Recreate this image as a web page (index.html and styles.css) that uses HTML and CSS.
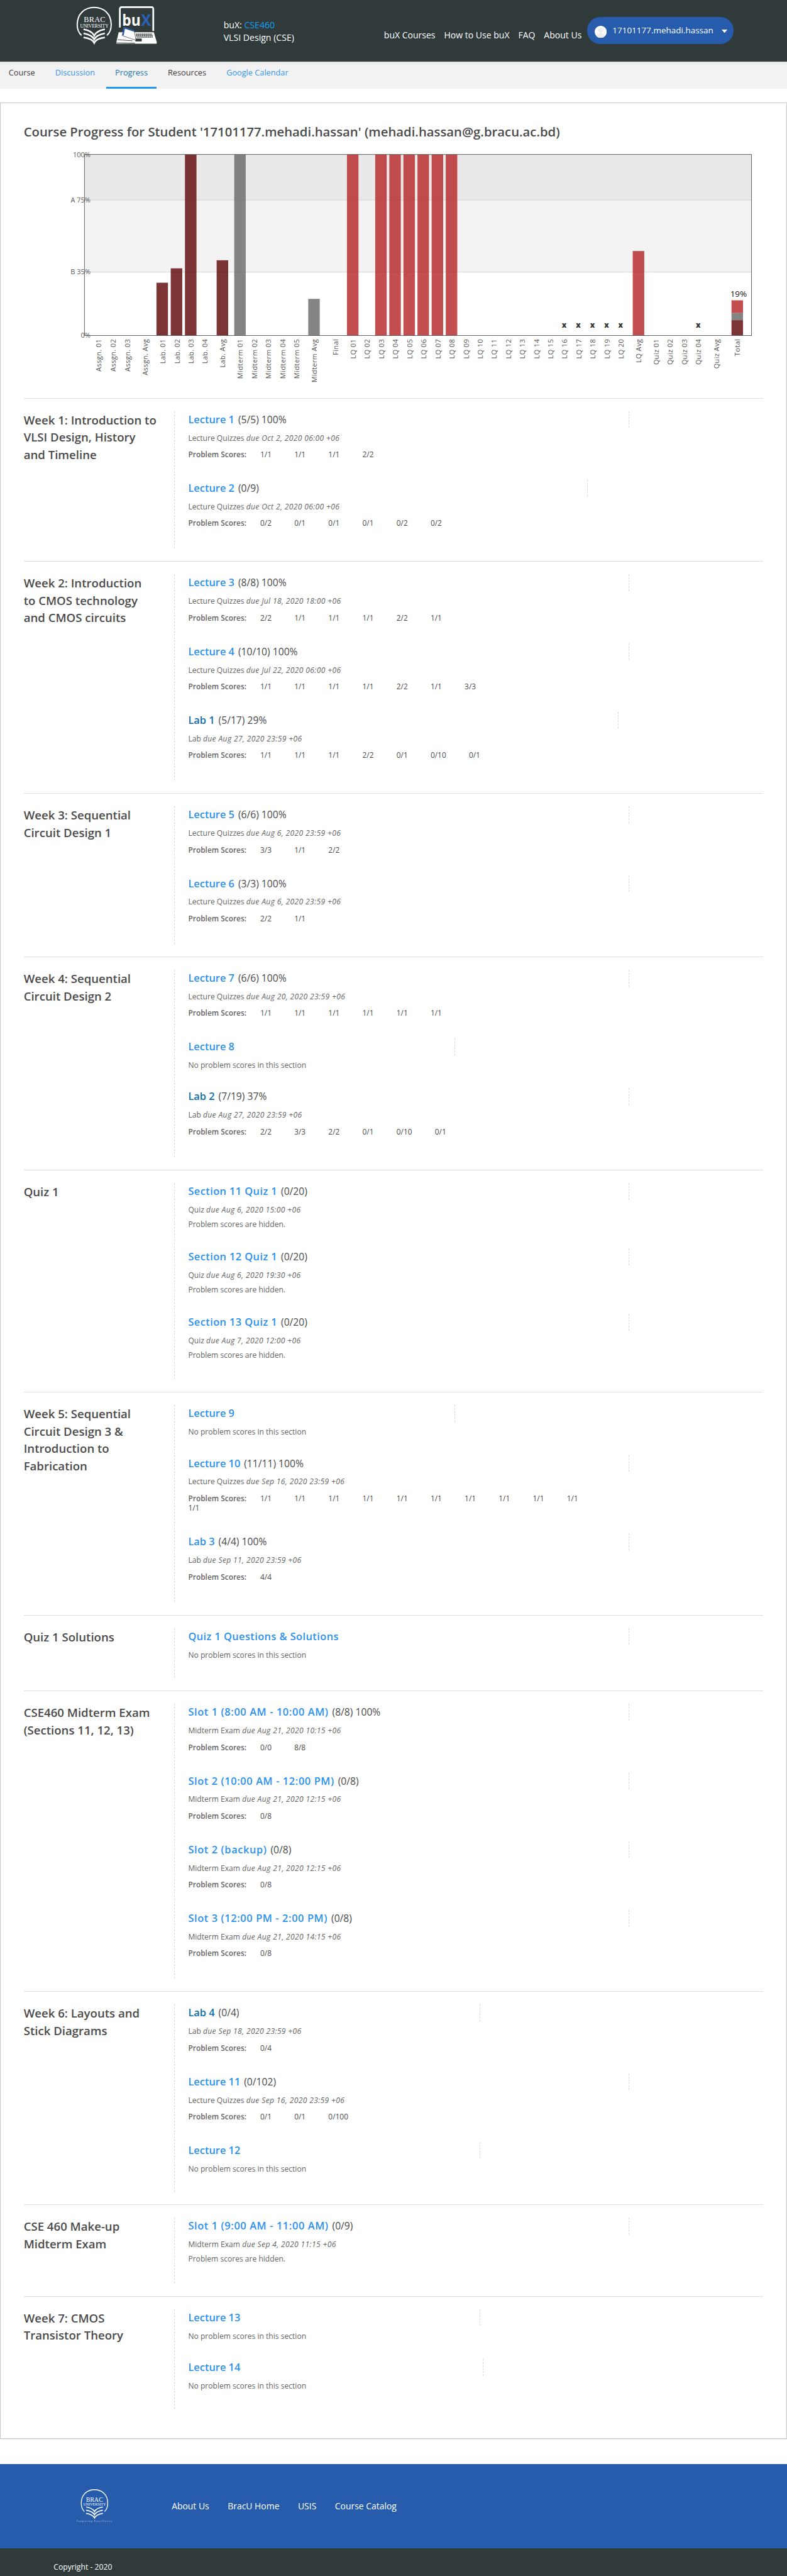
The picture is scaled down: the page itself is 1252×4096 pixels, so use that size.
FILE: index.html
```html
<!DOCTYPE html>
<html lang="en">
<head>
<meta charset="utf-8">
<title>VLSI Design (CSE) Course Progress</title>
<link rel="stylesheet" href="styles.css">
</head>
<body>
<header class="site-header">
  <svg class="brand" viewBox="132 10 142 68">
    <g fill="none" stroke="#fff" stroke-width="2.2">
      <path d="M141.5 61.5C135 56 134 49 134 43C134 24 147 13 163.5 13S193 24 193 43C193 49 192 56 185.5 61.5" />
      <g stroke-width="2.8">
        <path d="M145 51Q160 54 163.5 62Q167 54 182 51" />
        <path d="M145 58Q160 61 163.5 68.5Q167 61 182 58" />
        <path d="M145 65Q160 67 163.5 74.5Q167 67 182 65" />
      </g>
    </g>
    <text class="crest" x="145.3" y="38.3" font-size="13.5" textLength="37.5">BRAC</text>
    <text class="crest" x="139" y="48" font-size="8.5" textLength="49.5">UNIVERSITY</text>
    <path d="M208 48V16Q208 12.5 211 12.5H263Q266 12.5 266 16V54" fill="none" stroke="#fff" stroke-width="3" />
    <path d="M206 56H267L272 73V76H202V73Z" fill="#fff" />
    <path d="M202 74.5L234 75M204 69L230 71" stroke="#303a3b" stroke-width="1" />
    <path d="M236 59.5H264M236 62H265M237 64.5H265" stroke="#303a3b" stroke-width="1.8" stroke-dasharray="2.5 .8" />
    <path d="M235 67H246V72H235Z" fill="#303a3b" />
    <path d="M215 47L233 54L236 70L212 62Z" fill="#fff" stroke="#303a3b" stroke-width=".8" />
    <path d="M233 54L216 48.5L213.5 61.5" fill="none" stroke="#265cab" stroke-width="2.4" />
    <text class="laptop" x="212" y="45" fill="#fff" font-size="27" textLength="32" lengthAdjust="spacingAndGlyphs">bu</text>
    <text class="laptop" x="245" y="45" fill="#2a62b8" font-size="28" textLength="17" lengthAdjust="spacingAndGlyphs">X</text>
  </svg>
  <div class="course"><div>buX: <a class="course-code">CSE460</a></div><div>VLSI Design (CSE)</div></div>
  <nav class="main-nav"><a>buX Courses</a><a>How to Use buX</a><a>FAQ</a><a>About Us</a></nav>
  <div class="account">
    <svg class="avatar" viewBox="0 0 21 21"><circle cx="10.5" cy="10.5" r="10.5" fill="#fff"/><circle cx="10.5" cy="8" r="4.5" fill="#ededed"/><path d="M3.5 17.5Q5 12.5 10.5 12.5T17.5 17.5Q14.5 21 10.5 21T3.5 17.5" fill="#ededed"/></svg>
    <span class="account-name">17101177.mehadi.hassan</span>
    <svg class="caret" viewBox="0 0 10 6"><path d="M0 0H10L5 6Z" fill="#fff"/></svg>
  </div>
</header>
<nav class="tabs"><a>Course</a><a class="link">Discussion</a><a class="active">Progress</a><a>Resources</a><a class="link">Google Calendar</a></nav>

<main class="card">
  <h1>Course Progress for Student '17101177.mehadi.hassan' (mehadi.hassan@g.bracu.ac.bd)</h1>
  <svg class="chart" viewBox="1 245 1364 445">
    <rect x="146.5" y="267.5" width="1158" height="79" fill="#e9e9e9"/>
    <rect x="146.5" y="346.5" width="1158" height="125" fill="#f3f3f3"/>
    <path d="M146.5 346.5H1304.5M146.5 471.5H1304.5" stroke="#cfcfcf"/>
    <g class="lab"><rect x="271.5" y="490" width="20" height="91.5"/><rect x="296.3" y="465" width="20" height="116.5"/><rect x="321" y="267.5" width="20" height="314"/><rect x="376" y="451" width="20" height="130.5"/></g>
    <g class="mid"><rect x="406.5" y="267.5" width="20" height="314"/><rect x="535" y="518" width="20" height="63.5"/></g>
    <g class="quiz"><rect x="602.2" y="267.5" width="20" height="314"/><rect x="651.2" y="267.5" width="20" height="314"/><rect x="675.7" y="267.5" width="20" height="314"/><rect x="700.2" y="267.5" width="20" height="314"/><rect x="724.6" y="267.5" width="20" height="314"/><rect x="749.2" y="267.5" width="20" height="314"/><rect x="773.7" y="267.5" width="20" height="314"/><rect x="1098.3" y="435" width="20" height="146.5"/></g>
    <rect class="quiz" x="1269.7" y="520.5" width="20" height="22"/><rect class="mid" x="1269.7" y="542.5" width="20" height="12.5"/><rect class="lab" x="1269.7" y="555" width="20" height="26.5"/>
    <rect x="146.5" y="267.5" width="1158" height="314" fill="none" stroke="#545454"/>
    <g class="axis"><text x="157" y="272.5">100%</text><text x="157" y="350.7">A 75%</text><text x="157" y="475.7">B 35%</text><text x="157" y="585.5">0%</text></g>
    <g class="dropped"><text x="979.3" y="568">x</text><text x="1003.8" y="568">x</text><text x="1028.3" y="568">x</text><text x="1052.8" y="568">x</text><text x="1077.3" y="568">x</text><text x="1212" y="568">x</text></g>
    <text class="total" x="1267.5" y="515">19%</text>
    <g class="ticks">
      <text transform="translate(176 587.5) rotate(-90)">Assgn. 01</text>
      <text transform="translate(201 587.5) rotate(-90)">Assgn. 02</text>
      <text transform="translate(225.5 587.5) rotate(-90)">Assgn. 03</text>
      <text transform="translate(256 587.5) rotate(-90)">Assgn. Avg</text>
      <text transform="translate(287 587.5) rotate(-90)">Lab. 01</text>
      <text transform="translate(311.5 587.5) rotate(-90)">Lab. 02</text>
      <text transform="translate(336 587.5) rotate(-90)">Lab. 03</text>
      <text transform="translate(360.5 587.5) rotate(-90)">Lab. 04</text>
      <text transform="translate(391 587.5) rotate(-90)">Lab. Avg</text>
      <text transform="translate(421.5 587.5) rotate(-90)">Midterm 01</text>
      <text transform="translate(446 587.5) rotate(-90)">Midterm 02</text>
      <text transform="translate(470.5 587.5) rotate(-90)">Midterm 03</text>
      <text transform="translate(495 587.5) rotate(-90)">Midterm 04</text>
      <text transform="translate(519.5 587.5) rotate(-90)">Midterm 05</text>
      <text transform="translate(550 587.5) rotate(-90)">Midterm Avg</text>
      <text transform="translate(587 587.5) rotate(-90)">Final</text>
      <text transform="translate(617.6 587.5) rotate(-90)">LQ 01</text>
      <text transform="translate(642 587.5) rotate(-90)">LQ 02</text>
      <text transform="translate(666.5 587.5) rotate(-90)">LQ 03</text>
      <text transform="translate(691 587.5) rotate(-90)">LQ 04</text>
      <text transform="translate(715.5 587.5) rotate(-90)">LQ 05</text>
      <text transform="translate(740 587.5) rotate(-90)">LQ 06</text>
      <text transform="translate(764.5 587.5) rotate(-90)">LQ 07</text>
      <text transform="translate(789 587.5) rotate(-90)">LQ 08</text>
      <text transform="translate(813.5 587.5) rotate(-90)">LQ 09</text>
      <text transform="translate(838 587.5) rotate(-90)">LQ 10</text>
      <text transform="translate(862.3 587.5) rotate(-90)">LQ 11</text>
      <text transform="translate(886.8 587.5) rotate(-90)">LQ 12</text>
      <text transform="translate(911.2 587.5) rotate(-90)">LQ 13</text>
      <text transform="translate(935.7 587.5) rotate(-90)">LQ 14</text>
      <text transform="translate(960 587.5) rotate(-90)">LQ 15</text>
      <text transform="translate(984.5 587.5) rotate(-90)">LQ 16</text>
      <text transform="translate(1009 587.5) rotate(-90)">LQ 17</text>
      <text transform="translate(1033.5 587.5) rotate(-90)">LQ 18</text>
      <text transform="translate(1058 587.5) rotate(-90)">LQ 19</text>
      <text transform="translate(1082.3 587.5) rotate(-90)">LQ 20</text>
      <text transform="translate(1113 587.5) rotate(-90)">LQ Avg</text>
      <text transform="translate(1143.5 587.5) rotate(-90)">Quiz 01</text>
      <text transform="translate(1168 587.5) rotate(-90)">Quiz 02</text>
      <text transform="translate(1192.5 587.5) rotate(-90)">Quiz 03</text>
      <text transform="translate(1217 587.5) rotate(-90)">Quiz 04</text>
      <text transform="translate(1248 587.5) rotate(-90)">Quiz Avg</text>
      <text transform="translate(1284.7 587.5) rotate(-90)">Total</text>
    </g>
  </svg>

  <section class="chapter">
    <h2>Week 1: Introduction to<br>VLSI Design, History<br>and Timeline</h2>
    <div class="items">
      <article class="item"><h3><a>Lecture 1</a> <span>(5/5) 100%</span></h3><p>Lecture Quizzes <em>due Oct 2, 2020 06:00 +06</em></p><ul class="scores"><li>Problem Scores:</li><li>1/1</li><li>1/1</li><li>1/1</li><li>2/2</li></ul></article>
      <article class="item"><h3 class="w-692"><a>Lecture 2</a> <span>(0/9)</span></h3><p>Lecture Quizzes <em>due Oct 2, 2020 06:00 +06</em></p><ul class="scores"><li>Problem Scores:</li><li>0/2</li><li>0/1</li><li>0/1</li><li>0/1</li><li>0/2</li><li>0/2</li></ul></article>
    </div>
  </section>

  <section class="chapter">
    <h2>Week 2: Introduction<br>to CMOS technology<br>and CMOS circuits</h2>
    <div class="items">
      <article class="item"><h3><a>Lecture 3</a> <span>(8/8) 100%</span></h3><p>Lecture Quizzes <em>due Jul 18, 2020 18:00 +06</em></p><ul class="scores"><li>Problem Scores:</li><li>2/2</li><li>1/1</li><li>1/1</li><li>1/1</li><li>2/2</li><li>1/1</li></ul></article>
      <article class="item"><h3><a>Lecture 4</a> <span>(10/10) 100%</span></h3><p>Lecture Quizzes <em>due Jul 22, 2020 06:00 +06</em></p><ul class="scores"><li>Problem Scores:</li><li>1/1</li><li>1/1</li><li>1/1</li><li>1/1</li><li>2/2</li><li>1/1</li><li>3/3</li></ul></article>
      <article class="item"><h3 class="w-746"><a class="visited">Lab 1</a> <span>(5/17) 29%</span></h3><p>Lab <em>due Aug 27, 2020 23:59 +06</em></p><ul class="scores"><li>Problem Scores:</li><li>1/1</li><li>1/1</li><li>1/1</li><li>2/2</li><li>0/1</li><li>0/10</li><li>0/1</li></ul></article>
    </div>
  </section>

  <section class="chapter">
    <h2>Week 3: Sequential<br>Circuit Design 1</h2>
    <div class="items">
      <article class="item"><h3><a>Lecture 5</a> <span>(6/6) 100%</span></h3><p>Lecture Quizzes <em>due Aug 6, 2020 23:59 +06</em></p><ul class="scores"><li>Problem Scores:</li><li>3/3</li><li>1/1</li><li>2/2</li></ul></article>
      <article class="item"><h3><a>Lecture 6</a> <span>(3/3) 100%</span></h3><p>Lecture Quizzes <em>due Aug 6, 2020 23:59 +06</em></p><ul class="scores"><li>Problem Scores:</li><li>2/2</li><li>1/1</li></ul></article>
    </div>
  </section>

  <section class="chapter">
    <h2>Week 4: Sequential<br>Circuit Design 2</h2>
    <div class="items">
      <article class="item"><h3><a>Lecture 7</a> <span>(6/6) 100%</span></h3><p>Lecture Quizzes <em>due Aug 20, 2020 23:59 +06</em></p><ul class="scores"><li>Problem Scores:</li><li>1/1</li><li>1/1</li><li>1/1</li><li>1/1</li><li>1/1</li><li>1/1</li></ul></article>
      <article class="item empty"><h3 class="w-462"><a>Lecture 8</a></h3><p>No problem scores in this section</p></article>
      <article class="item"><h3><a class="visited">Lab 2</a> <span>(7/19) 37%</span></h3><p>Lab <em>due Aug 27, 2020 23:59 +06</em></p><ul class="scores"><li>Problem Scores:</li><li>2/2</li><li>3/3</li><li>2/2</li><li>0/1</li><li>0/10</li><li>0/1</li></ul></article>
    </div>
  </section>

  <section class="chapter">
    <h2>Quiz 1</h2>
    <div class="items">
      <article class="item hidden-scores"><h3><a class="wide">Section 11 Quiz 1</a> <span>(0/20)</span></h3><p>Quiz <em>due Aug 6, 2020 15:00 +06</em></p><p class="note">Problem scores are hidden.</p></article>
      <article class="item hidden-scores"><h3><a class="wide">Section 12 Quiz 1</a> <span>(0/20)</span></h3><p>Quiz <em>due Aug 6, 2020 19:30 +06</em></p><p class="note">Problem scores are hidden.</p></article>
      <article class="item hidden-scores"><h3><a class="wide">Section 13 Quiz 1</a> <span>(0/20)</span></h3><p>Quiz <em>due Aug 7, 2020 12:00 +06</em></p><p class="note">Problem scores are hidden.</p></article>
    </div>
  </section>

  <section class="chapter">
    <h2>Week 5: Sequential<br>Circuit Design 3 &amp;<br>Introduction to<br>Fabrication</h2>
    <div class="items">
      <article class="item empty"><h3 class="w-462"><a>Lecture 9</a></h3><p>No problem scores in this section</p></article>
      <article class="item"><h3><a>Lecture 10</a> <span>(11/11) 100%</span></h3><p>Lecture Quizzes <em>due Sep 16, 2020 23:59 +06</em></p><ul class="scores"><li>Problem Scores:</li><li>1/1</li><li>1/1</li><li>1/1</li><li>1/1</li><li>1/1</li><li>1/1</li><li>1/1</li><li>1/1</li><li>1/1</li><li>1/1</li><li>1/1</li></ul></article>
      <article class="item"><h3><a>Lab 3</a> <span>(4/4) 100%</span></h3><p>Lab <em>due Sep 11, 2020 23:59 +06</em></p><ul class="scores"><li>Problem Scores:</li><li>4/4</li></ul></article>
    </div>
  </section>

  <section class="chapter">
    <h2>Quiz 1 Solutions</h2>
    <div class="items">
      <article class="item empty"><h3><a class="wide">Quiz 1 Questions &amp; Solutions</a></h3><p>No problem scores in this section</p></article>
    </div>
  </section>

  <section class="chapter">
    <h2>CSE460 Midterm Exam<br>(Sections 11, 12, 13)</h2>
    <div class="items">
      <article class="item"><h3><a class="slot">Slot 1 (8:00 AM - 10:00 AM)</a> <span>(8/8) 100%</span></h3><p>Midterm Exam <em>due Aug 21, 2020 10:15 +06</em></p><ul class="scores"><li>Problem Scores:</li><li>0/0</li><li>8/8</li></ul></article>
      <article class="item"><h3><a class="slot">Slot 2 (10:00 AM - 12:00 PM)</a> <span>(0/8)</span></h3><p>Midterm Exam <em>due Aug 21, 2020 12:15 +06</em></p><ul class="scores"><li>Problem Scores:</li><li>0/8</li></ul></article>
      <article class="item"><h3><a class="slot">Slot 2 (backup)</a> <span>(0/8)</span></h3><p>Midterm Exam <em>due Aug 21, 2020 12:15 +06</em></p><ul class="scores"><li>Problem Scores:</li><li>0/8</li></ul></article>
      <article class="item"><h3><a class="slot">Slot 3 (12:00 PM - 2:00 PM)</a> <span>(0/8)</span></h3><p>Midterm Exam <em>due Aug 21, 2020 14:15 +06</em></p><ul class="scores"><li>Problem Scores:</li><li>0/8</li></ul></article>
    </div>
  </section>

  <section class="chapter">
    <h2>Week 6: Layouts and<br>Stick Diagrams</h2>
    <div class="items">
      <article class="item"><h3 class="w-506"><a class="visited">Lab 4</a> <span>(0/4)</span></h3><p>Lab <em>due Sep 18, 2020 23:59 +06</em></p><ul class="scores"><li>Problem Scores:</li><li>0/4</li></ul></article>
      <article class="item"><h3><a>Lecture 11</a> <span>(0/102)</span></h3><p>Lecture Quizzes <em>due Sep 16, 2020 23:59 +06</em></p><ul class="scores"><li>Problem Scores:</li><li>0/1</li><li>0/1</li><li>0/100</li></ul></article>
      <article class="item empty"><h3 class="w-506"><a>Lecture 12</a></h3><p>No problem scores in this section</p></article>
    </div>
  </section>

  <section class="chapter">
    <h2>CSE 460 Make-up<br>Midterm Exam</h2>
    <div class="items">
      <article class="item hidden-scores"><h3><a class="slot">Slot 1 (9:00 AM - 11:00 AM)</a> <span>(0/9)</span></h3><p>Midterm Exam <em>due Sep 4, 2020 11:15 +06</em></p><p class="note">Problem scores are hidden.</p></article>
    </div>
  </section>

  <section class="chapter">
    <h2>Week 7: CMOS<br>Transistor Theory</h2>
    <div class="items">
      <article class="item empty"><h3 class="w-506"><a>Lecture 13</a></h3><p>No problem scores in this section</p></article>
      <article class="item empty"><h3 class="w-511"><a>Lecture 14</a></h3><p>No problem scores in this section</p></article>
    </div>
  </section>
</main>

<footer>
  <div class="footer-links">
    <svg class="footer-crest" viewBox="132 4316 64 60">
      <g fill="none" stroke="#fff" stroke-width="1.5">
        <path d="M146.5 4357C142 4353 141 4347 141 4342C141 4328 151 4319 164 4319S187 4328 187 4342C187 4347 186 4353 181.5 4357"/>
        <g stroke-width="1.9"><path d="M149.5 4349Q161 4351 164 4357Q167 4351 178.5 4349"/><path d="M149.5 4354.5Q161 4356.5 164 4362.5Q167 4356.5 178.5 4354.5"/><path d="M149.5 4360Q161 4362 164 4368Q167 4362 178.5 4360"/></g>
      </g>
      <text class="crest" x="149.5" y="4339.5" font-size="10.5" textLength="29">BRAC</text>
      <text class="crest" x="144.8" y="4346.5" font-size="6.5" textLength="39">UNIVERSITY</text>
      <text class="motto" x="133" y="4374.5" font-size="5" textLength="62">Inspiring Excellence</text>
    </svg>
    <nav><a>About Us</a><a>BracU Home</a><a>USIS</a><a>Course Catalog</a></nav>
  </div>
  <div class="copyright">Copyright - 2020</div>
</footer>
</body>
</html>
```
FILE: styles.css
```css
* { box-sizing: border-box; }
html { background: #fff; font-size: 9.1666px; }
body {
  margin: 0;
  font-family: "Open Sans", "Noto Sans", sans-serif;
  color: #414141;
  background: #fff;
}
h1, h2, h3, p, ul { margin: 0; padding: 0; }

.site-header {
  display: flex;
  align-items: flex-start;
  height: 10.7rem;
  padding: 1rem 0 0 13.2rem;
  background: #303a3b;
  color: #fff;
  font-size: 1.54rem;
  line-height: 2.2rem;
}
.brand { flex: none; width: 14.2rem; height: 6.8rem; margin-right: 11.4rem; }
.crest { font-family: "Liberation Serif", serif; fill: #fff; }
.motto { font-family: "Liberation Serif", serif; fill: #b9cbe6; }
.laptop { font-family: "Open Sans", sans-serif; font-weight: 700; }
.course { width: 27.84rem; flex: none; margin-top: 2.3rem; }
.course-code { color: #139ff2; }
.main-nav { display: flex; gap: 1.52rem; width: 35.26rem; flex: none; margin-top: 4rem; white-space: nowrap; font-size: 1.53rem; }
.account {
  display: flex;
  align-items: flex-start;
  flex: none;
  width: 25.4rem;
  height: 4.6rem;
  margin-top: 2rem;
  padding: 1.2rem 1rem 0 1.3rem;
  border-radius: 2.3rem;
  background: #265cab;
  font-size: 1.47rem;
}
.avatar { width: 2.1rem; height: 2.1rem; margin: .3rem 1rem 0 0; flex: none; }
.account-name { width: 19rem; }
.caret { width: 1rem; height: .6rem; margin-top: .9rem; flex: none; }

.tabs {
  display: flex;
  gap: .5rem;
  height: 4.7rem;
  background: linear-gradient(#e5e5e5, #f2f2f2 5px);
  font-size: 1.39rem;
  line-height: 3.9rem;
}
.tabs a { padding: 0 1.5rem .4rem; border-bottom: .4rem solid transparent; color: #3a3a3a; }
.tabs .link { color: #3492ee; }
.tabs .active { color: #1b76ae; border-color: #2196f3; }

.card {
  margin: 2.4rem 0 4.3rem;
  height: 405.3rem;
  padding: 3.3rem 4rem 0;
  border: 1px solid #c8c8c8;
  box-shadow: 0 1px 2px rgba(0, 0, 0, .1);
}
h1 { font-size: 2.214rem; line-height: 3.3rem; font-weight: 600; color: #4a4a4a; white-space: nowrap; }

.chart { display: block; width: calc(100% + 8rem); height: 44.5rem; margin: 0 -4rem; }
.lab { fill: #661010; fill-opacity: .85; }
.mid { fill: #6e6e6e; fill-opacity: .85; }
.quiz { fill: #b82c2d; fill-opacity: .84; }
.axis { font-size: 12px; fill: #5a5a5a; text-anchor: end; }
.dropped { font-size: 13px; font-weight: 800; fill: #333; text-anchor: middle; }
.total { font-size: 14.7px; fill: #222; }
.ticks { font-size: 12px; letter-spacing: .4px; fill: #555; text-anchor: end; }

.chapter {
  display: flex;
  padding: 2.2rem 0;
  border-top: 1px solid #dedede;
}
.chapter h2 {
  flex: none;
  width: 26.1rem;
  font-size: 2.03rem;
  line-height: 3rem;
  font-weight: 600;
  color: #4a4a4a;
  white-space: nowrap;
}
.items { flex: 1; padding-left: 2.35rem; border-left: 1px dashed #d9d9d9; }
.item { padding-bottom: 3.517rem; }
.item.empty { padding-bottom: 2.947rem; }
.item.hidden-scores { padding-bottom: 3.147rem; }
.item h3 {
  width: 76.55rem;
  height: 2.9rem;
  border-right: 1px dashed #d9d9d9;
  font-size: 1.71rem;
  line-height: 2.9rem;
  font-weight: 400;
  color: #4a4a4a;
  white-space: nowrap;
}
.item .w-692 { width: 69.35rem; }
.item .w-746 { width: 74.7rem; }
.item .w-462 { width: 46.35rem; }
.item .w-506 { width: 50.7rem; }
.item .w-511 { width: 51.2rem; }
.item h3 a { font-size: 1.79rem; font-weight: 600; color: #2b91ee; }
.item h3 span { margin-left: .2rem; }
.item h3 a.visited { color: #0f6ead; }
.item h3 a.wide { letter-spacing: .045rem; }
.item h3 a.slot { letter-spacing: .065rem; }
.item p { margin-top: .8rem; font-size: 1.32rem; line-height: 2rem; color: #646464; }
.item em { letter-spacing: .038rem; }
.item p.note { margin-top: .5rem; }

.scores {
  display: flex;
  flex-wrap: wrap;
  width: 76.4rem;
  margin-top: 1rem;
  list-style: none;
  font-size: 1.3rem;
  line-height: 1.7rem;
  color: #4a4a4a;
}
.scores li { margin-right: 3.95rem; }
.scores li:first-child { margin-right: 2.4rem; font-weight: 600; color: #646464; }

footer { color: #fff; }
.footer-links {
  display: flex;
  align-items: flex-start;
  height: 14.6rem;
  padding: 4.2rem 0 0 13.2rem;
  background: #265cab;
}
.footer-crest { width: 6.4rem; height: 6rem; flex: none; }
.footer-links nav { display: flex; gap: 3.22rem; margin: 2rem 0 0 10.2rem; font-size: 1.52rem; line-height: 2.2rem; white-space: nowrap; }
.copyright {
  height: 4.8rem;
  padding: 2.2rem 0 0 9.3rem;
  background: #303a3b;
  font-size: 1.33rem;
  line-height: 2.2rem;
}
```
